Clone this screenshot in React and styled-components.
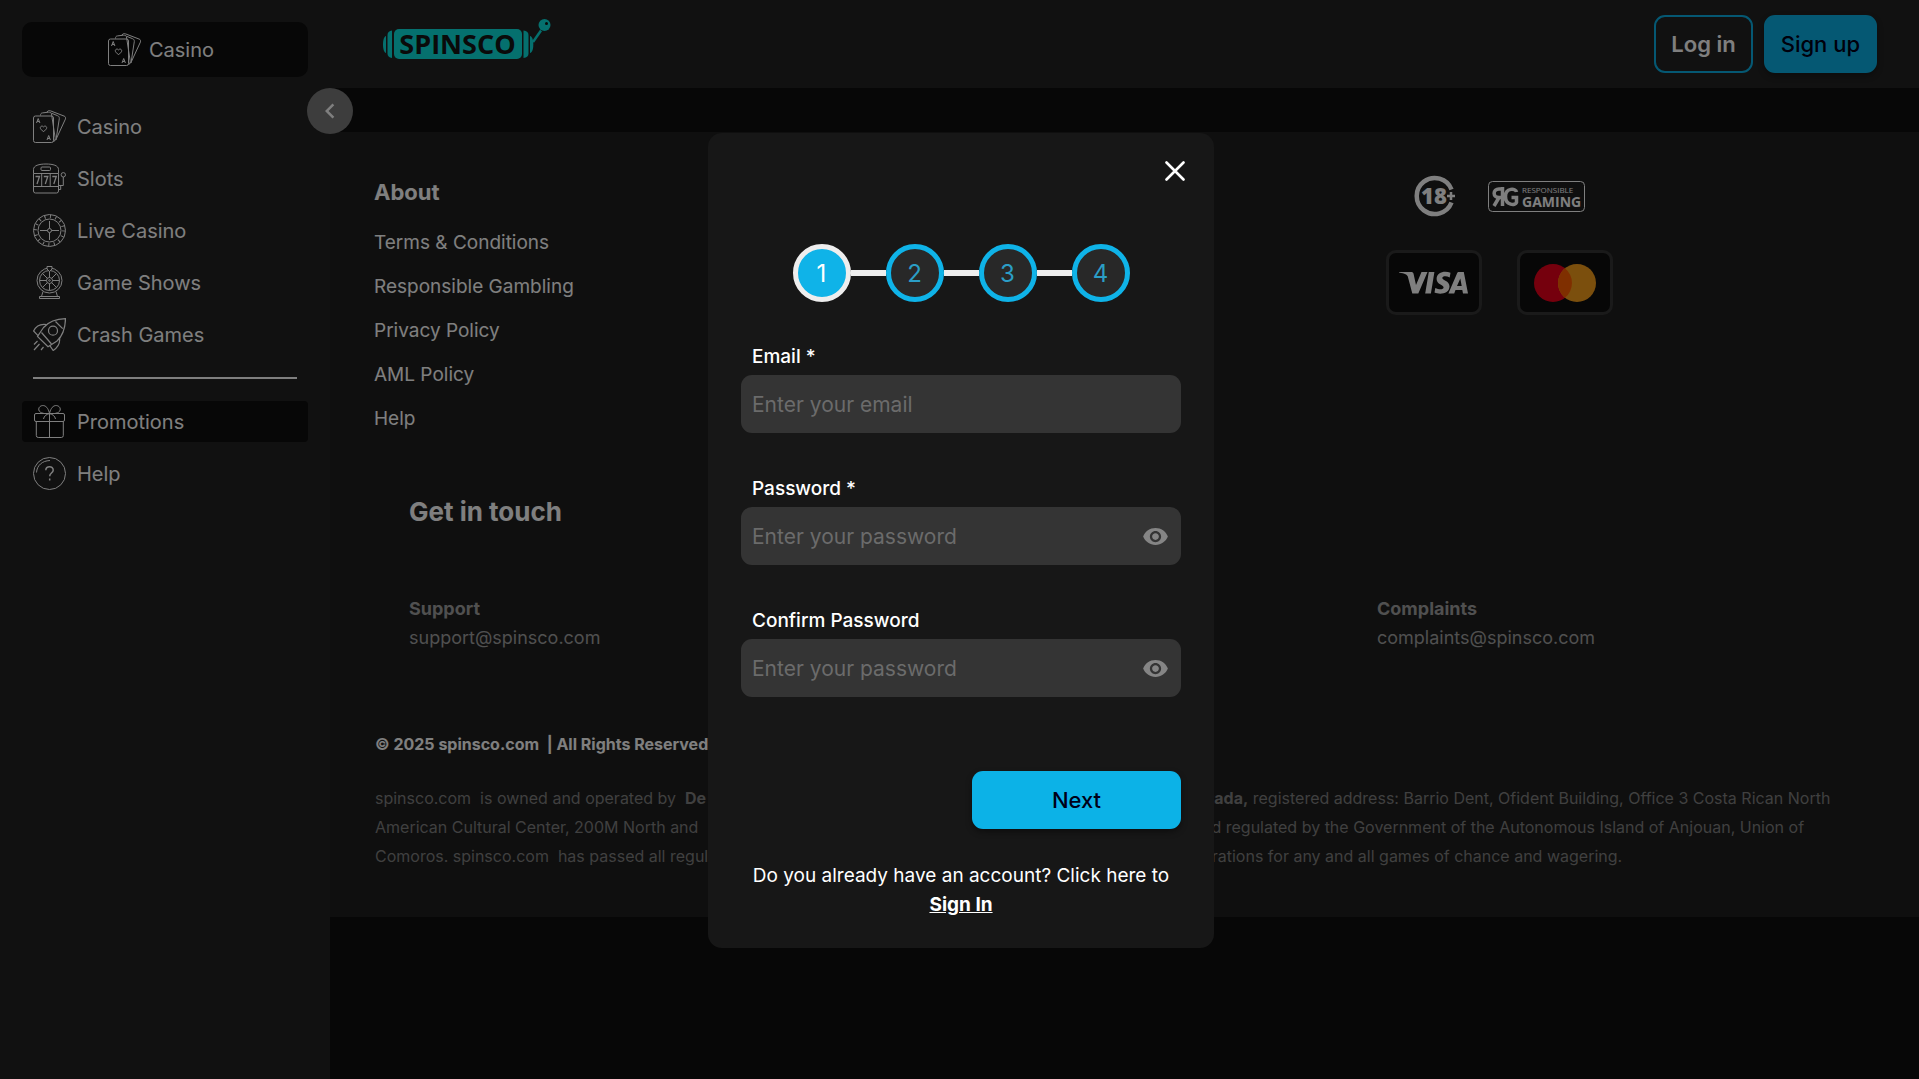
import React, { useState } from "react";
import styled, { createGlobalStyle } from "styled-components";
import { MdVisibility, MdChevronLeft } from "react-icons/md";

const GlobalStyle = createGlobalStyle`
  * {
    box-sizing: border-box;
  }
  body {
    margin: 0;
    background: #0e0e0e;
    color: #fff;
    font-family: Inter, "Open Sans", sans-serif;
  }
  h2, h3, p, ul {
    margin: 0;
    padding: 0;
  }
  a {
    color: inherit;
    text-decoration: none;
  }
  button, input {
    font-family: inherit;
  }
`;

const CardsIcon = () => (
  <Icon viewBox="0 0 33 33">
    <rect x="0.5" y="6" width="20" height="26.5" rx="2" />
    <path d="M7.5 5.5c0-1.6.5-2.4 2-2.6l6-.7c2-.2 2.7.5 3 1.800l3.600 23.500c.2 1.800-.2 2.900-1.600 3.500" />
    <path d="M13.500 2.300l1.500-1.300c.8-.6 1.600-.5 2.600-.1l13.600 5.200c1.400.6 1.700 1.600 1.200 3l-9 19.500c-.6 1.400-1.400 2.200-2.800 2.900" />
    <path d="M18.700 3.300l5.700 2.300c1.500.6 2 1.500 1.900 3l-3.300 21.400" />
    <path d="M10.500 21.800l-2.600-2.600c-1.800-2 .8-4.400 2.600-2.300 1.800-2.100 4.400.3 2.600 2.300z" />
    <path d="M3.500 13l1.700-4.500L6.900 13M4.100 11.500h2.200M14 30l1.700-4.500 1.700 4.500M14.600 28.500h2.200" />
  </Icon>
);

const SlotsIcon = () => (
  <Icon viewBox="0 0 33 33">
    <path d="M.5 11.500V7.500C.5 3.500 6 2 13 2s12.500 1.500 12.500 5.500v4M.5 11.500v17.500a2 2 0 0 0 2 2h21a2 2 0 0 0 2-2V11.500zM.5 24.500h25" />
    <rect x="8" y="5" width="9.500" height="3.500" rx="1" />
    <path d="M8.700 11.500v13M17.200 11.500v13" />
    <path d="M2.500 14.500h4L4 22M10.800 14.500h4L12.300 22M19.300 14.500h4L20.800 22" strokeWidth="1.300" />
    <circle cx="30.300" cy="12.800" r="2.200" />
    <path d="M30.300 15v8.500h-4.800M25.500 27.500h2.200v-4" />
  </Icon>
);

const RouletteIcon = () => (
  <Icon viewBox="0 0 33 33">
    <circle cx="16.500" cy="16.500" r="16" />
    <circle cx="16.500" cy="16.500" r="14" strokeWidth="3.200" strokeDasharray="1 4.500" />
    <circle cx="16.500" cy="16.500" r="11.500" />
    <circle cx="16.500" cy="16.500" r="2" />
    <path d="M16.500 7v7.500M16.500 18.500V26M7 16.500h7.500M18.500 16.500H26" />
  </Icon>
);

const WheelIcon = () => (
  <Icon viewBox="0 0 33 33">
    <circle cx="16.500" cy="14.500" r="12.500" />
    <circle cx="16.500" cy="14.500" r="10" />
    <circle cx="16.500" cy="14.500" r="3" />
    <circle cx="16.500" cy="14.500" r=".8" />
    <path d="M16.500 4.500v7M16.500 17.500v7M6.500 14.500h7M19.500 14.500h7M9.400 7.400l5 5M18.600 16.600l5 5M23.600 7.400l-5 5M14.400 16.600l-5 5" />
    <path d="M14 .5h5v2.500L16.500 5.500 14 3z" fill="#222" />
    <path d="M10 25.500l-1.500 5h16l-1.500-5M6.500 30.500h20v2h-20z" />
  </Icon>
);

const RocketIcon = () => (
  <Icon viewBox="0 0 33 33" $weight={1.2}>
    <path d="M32.500.6C24 .8 15.500 3.800 10.500 9.500L4.500 18.500 15 28.800l9-5.800C29.500 18 32.300 9.500 32.500.6z" />
    <path d="M22.500 3.500l7.200 7.200" />
    <circle cx="20" cy="12.700" r="4.500" />
    <path d="M13.500 6.500C7 5.500 3 8 .6 13l4.400 4.600M26.500 19.500c1 6-1.300 9.500-6.300 13l-3.400-4.800" />
    <path d="M8.500 14.500l10 11.500M4.500 23l-3.500 3.500M6.500 26l-5.500 6M10.500 29l-2.500 3" />
  </Icon>
);

const GiftIcon = () => (
  <Icon viewBox="0 0 33 33">
    <rect x="1.500" y="8.500" width="30" height="8" rx="1.500" />
    <path d="M3.300 16.500v14a2 2 0 0 0 2 2h23a2 2 0 0 0 2-2v-14M16.500 8.500v24" />
    <path d="M16.500 8.500C13 9 6.500 8.500 5.800 5 5.300 2 8 .2 10.700.6c3.300.5 5 4.400 5.800 7.900zM16.500 8.500c3.500.5 10 0 10.700-3.500.5-3-2.200-4.800-4.900-4.400-3.300.5-5 4.400-5.800 7.900z" />
    <path d="M16.500 8.500c-3 .8-5.500 2.500-6 5.500M16.500 8.500c3 .8 5.500 2.500 6 5.500" />
  </Icon>
);

const HelpIcon = () => (
  <Icon viewBox="0 0 33 33">
    <circle cx="16.500" cy="16.500" r="16" />
    <path d="M3.500 15.500C4 8.500 9 3.800 17 3.500" />
    <path d="M12.800 13.200c.2-4.600 7.600-4.500 7.400 0-.1 2.800-3.500 3-3.500 6M16.700 21.500v2" strokeWidth="1.500" />
  </Icon>
);

const Brand = () => (
  <BrandSvg viewBox="0 0 170 42" role="img" aria-label="Spinsco">
    <g fill="#0ae0dc">
      <path d="M4 18v17c-2-.6-3-4-3-8.500s1-7.900 3-8.500z" />
      <path d="M5.500 17c0-2.500 1.500-4 4.500-4.500v27.500c-3-.5-4.500-2-4.500-4.500z" />
      <rect x="12" y="11" width="128" height="30" rx="5" />
      <path d="M146.500 17c0-2.500-1.500-4-5-4.500v27.500c3.500-.5 5-2 5-4.500z" />
      <path d="M148 18v17c2.300-.6 3.300-4 3.300-8.500s-1-7.900-3.300-8.500z" />
      <circle cx="162.500" cy="7" r="6" />
    </g>
    <path d="M151 24l8-11.500" stroke="#0ae0dc" strokeWidth="2.500" />
    <circle cx="164.500" cy="5.500" r="1.500" fill="#111" />
    <text x="75.500" y="35.500" textAnchor="middle" fontFamily="Open Sans" fontWeight="700" fontSize="27" fill="#151515">
      SPINSCO
    </text>
  </BrandSvg>
);

const AgeBadge = () => (
  <svg width="42" height="42" viewBox="0 0 42 42" role="img" aria-label="18+">
    <path d="M37.500 14.500a18 18 0 1 0 0 13" fill="none" stroke="#fff" strokeWidth="4.500" />
    <text x="7" y="29" fontFamily="Open Sans" fontWeight="800" fontSize="22" fill="#fff">
      18
    </text>
    <path d="M33 21h8M37 17v8" stroke="#fff" strokeWidth="2.500" />
  </svg>
);

const GamingBadge = () => (
  <svg width="97" height="31" viewBox="0 0 97 31" role="img" aria-label="Responsible Gaming">
    <rect x=".5" y=".5" width="96" height="30" rx="4" fill="none" stroke="#fff" />
    <path
      d="M14.500 6v19M14.500 8H11c-6.500 0-6.500 8.500 0 8.500h3.500M11 16.500L6 25M28.500 11c-.5-4-11-4.500-11 4.500s10 9.500 11 6v-5h-5"
      fill="none"
      stroke="#fff"
      strokeWidth="3.500"
    />
    <text x="34" y="12" fontFamily="Open Sans" fontSize="8" fill="#fff">
      RESPONSIBLE
    </text>
    <text x="34" y="26" fontFamily="Open Sans" fontWeight="700" fontSize="14" fill="#fff">
      GAMING
    </text>
  </svg>
);

const Visa = () => (
  <svg width="70" height="24" viewBox="0 0 70 24" role="img" aria-label="Visa">
    <g fill="#fff">
      <path d="M0 1h12c1.500 0 2.300.6 2.600 2l2.400 11L22.500 1h6l-9.200 21.500h-6L8.800 5.500C8.500 4 6 2.500 0 1.500z" />
      <path d="M29.800 1h5.600l-3.500 21.500h-5.700z" />
      <path d="M51.500 1.800l-.8 4.600c-3.500-1.700-7.400-1.300-7.400.6 0 2.500 7.200 2.700 7.200 8.300 0 7.500-9.500 8.800-15 6.300l.8-4.700c3.500 2 8.300 1.900 8.300-.4 0-2.800-7-2.800-7-8.400C37.600.9 46-.6 51.500 1.800z" />
      <path d="M59.800 1h5L69 22.500h-5l-.7-3.500h-6.800l-1.300 3.500h-5.800L58 2.500c.3-1 .8-1.500 1.800-1.500zM61.300 7.500L58 15h4.700z" fillRule="evenodd" />
    </g>
  </svg>
);

const Mastercard = () => (
  <svg width="62" height="38" viewBox="0 0 62 38" role="img" aria-label="Mastercard">
    <circle cx="19" cy="19" r="19" fill="#eb001b" />
    <circle cx="43" cy="19" r="19" fill="#f79e1b" />
    <path d="M31 4.300a19 19 0 0 1 0 29.400 19 19 0 0 1 0-29.400z" fill="#ff5f00" />
  </svg>
);

const menu = [
  { label: "Casino", icon: <CardsIcon /> },
  { label: "Slots", icon: <SlotsIcon /> },
  { label: "Live Casino", icon: <RouletteIcon /> },
  { label: "Game Shows", icon: <WheelIcon /> },
  { label: "Crash Games", icon: <RocketIcon /> },
];

const aboutLinks = [
  "Terms & Conditions",
  "Responsible Gambling",
  "Privacy Policy",
  "AML Policy",
  "Help",
];

function PasswordField({ id, label }) {
  const [visible, setVisible] = useState(false);

  return (
    <Field>
      <Label htmlFor={id}>{label}</Label>
      <InputBox>
        <Input
          id={id}
          type={visible ? "text" : "password"}
          placeholder="Enter your password"
        />
        <EyeButton
          type="button"
          aria-label="Show password"
          onClick={() => setVisible(!visible)}
        >
          <MdVisibility size={27} />
        </EyeButton>
      </InputBox>
    </Field>
  );
}

function SignUpModal({ onClose }) {
  return (
    <Overlay>
      <Modal role="dialog" aria-label="Sign up">
        <CloseButton type="button" aria-label="Close" onClick={onClose}>
          <svg width="20" height="20" viewBox="0 0 20 20">
            <path d="M1.500 1.500l17 17M18.500 1.500l-17 17" stroke="#fff" strokeWidth="2.600" strokeLinecap="round" />
          </svg>
        </CloseButton>
        <Steps>
          {[1, 2, 3, 4].map((step) => (
            <React.Fragment key={step}>
              {step > 1 && <StepLine />}
              <Step $active={step === 1}>{step}</Step>
            </React.Fragment>
          ))}
        </Steps>
        <form onSubmit={(e) => e.preventDefault()}>
          <Field>
            <Label htmlFor="email">Email *</Label>
            <InputBox>
              <Input id="email" type="email" placeholder="Enter your email" />
            </InputBox>
          </Field>
          <PasswordField id="password" label="Password *" />
          <PasswordField id="confirm" label="Confirm Password" />
          <NextButton type="submit">Next</NextButton>
        </form>
        <SignInText>
          Do you already have an account? Click here to
          <br />
          <a href="#signin">Sign In</a>
        </SignInText>
      </Modal>
    </Overlay>
  );
}

function App() {
  const [open, setOpen] = useState(true);

  return (
    <>
      <GlobalStyle />
      <Page>
        <Sidebar>
          <CasinoButton type="button">
            <CardsIcon />
            Casino
          </CasinoButton>
          <Nav>
            {menu.map((item) => (
              <NavItem key={item.label} href="#">
                {item.icon}
                {item.label}
              </NavItem>
            ))}
          </Nav>
          <Divider />
          <Nav>
            <NavItem href="#" $dark>
              <GiftIcon />
              Promotions
            </NavItem>
            <NavItem href="#">
              <HelpIcon />
              Help
            </NavItem>
          </Nav>
          <CollapseButton type="button" aria-label="Collapse menu">
            <MdChevronLeft size={30} />
          </CollapseButton>
        </Sidebar>
        <Main>
          <Header>
            <Brand />
            <Actions>
              <LoginButton type="button">Log in</LoginButton>
              <SignupButton type="button" onClick={() => setOpen(true)}>
                Sign up
              </SignupButton>
            </Actions>
          </Header>
          <Footer>
            <FooterTop>
              <div>
                <AboutTitle>About</AboutTitle>
                <Links>
                  {aboutLinks.map((link) => (
                    <li key={link}>
                      <a href="#">{link}</a>
                    </li>
                  ))}
                </Links>
              </div>
              <Badges>
                <BadgeRow $gap="32px">
                  <AgeBadge />
                  <GamingBadge />
                </BadgeRow>
                <BadgeRow $gap="35px">
                  <PayCard>
                    <Visa />
                  </PayCard>
                  <PayCard>
                    <Mastercard />
                  </PayCard>
                </BadgeRow>
              </Badges>
            </FooterTop>
            <TouchTitle>Get in touch</TouchTitle>
            <Contacts>
              <Contact>
                <strong>Support</strong>
                <a href="mailto:support@spinsco.com">support@spinsco.com</a>
              </Contact>
              <Contact $column={3}>
                <strong>Complaints</strong>
                <a href="mailto:complaints@spinsco.com">complaints@spinsco.com</a>
              </Contact>
            </Contacts>
            <FooterText>
              <Copyright>© 2025 spinsco.com &nbsp;| All Rights Reserved</Copyright>
              <LegalLine $split="801px">
                <span>
                  spinsco.com &nbsp;is owned and operated by &nbsp;<strong>De</strong>
                </span>
                <span>
                  <strong>Limitada,</strong> registered address: Barrio Dent, Ofident Building,
                  Office 3 Costa Rican North
                </span>
              </LegalLine>
              <LegalLine $split="818px">
                <span>American Cultural Center, 200M North and</span>
                <span>
                  and regulated by the Government of the Autonomous Island of Anjouan, Union of
                </span>
              </LegalLine>
              <LegalLine $split="808px">
                <span>Comoros. spinsco.com &nbsp;has passed all regulatory</span>
                <span>operations for any and all games of chance and wagering.</span>
              </LegalLine>
            </FooterText>
          </Footer>
        </Main>
      </Page>
      {open && <SignUpModal onClose={() => setOpen(false)} />}
    </>
  );
}

const Page = styled.div`
  display: flex;
  min-height: 100vh;
`;

const Sidebar = styled.aside`
  position: relative;
  flex: 0 0 330px;
  padding: 22px;
  background: #222;
`;

const Icon = styled.svg`
  width: 33px;
  height: 33px;
  flex-shrink: 0;
  fill: none;
  stroke: #fff;
  stroke-width: ${(props) => props.$weight || 1};
`;

const CasinoButton = styled.button`
  display: flex;
  align-items: center;
  justify-content: center;
  gap: 8px;
  width: 100%;
  height: 55px;
  padding: 0 14px 0 6px;
  margin-bottom: 29px;
  color: #fff;
  background: #0e0e0e;
  border: 0;
  border-radius: 10px;
  font-size: 20px;
  cursor: pointer;
`;

const Nav = styled.nav`
  display: flex;
  flex-direction: column;
  gap: 11px;
`;

const NavItem = styled.a`
  display: flex;
  align-items: center;
  gap: 11px;
  height: 41px;
  padding: 0 11px;
  border-radius: 4px;
  font-size: 20px;
  background: ${(props) => (props.$dark ? "#0e0e0e" : "transparent")};
`;

const Divider = styled.hr`
  height: 2px;
  margin: 22px 11px;
  border: 0;
  background: #fff;
`;

/* sits on the edge between the menu and the content */
const CollapseButton = styled.button`
  position: absolute;
  top: 88px;
  right: -23px;
  display: flex;
  align-items: center;
  justify-content: center;
  width: 46px;
  height: 46px;
  padding: 0;
  color: #fff;
  background: #7a7a7a;
  border: 0;
  border-radius: 50%;
  cursor: pointer;
`;

const Main = styled.main`
  flex: 1;
  min-width: 0;
`;

const Header = styled.header`
  display: flex;
  align-items: center;
  justify-content: space-between;
  height: 88px;
  padding: 0 42px 0 52px;
  margin-bottom: 44px;
  background: #222;
`;

const BrandSvg = styled.svg`
  width: 170px;
  height: 42px;
  margin-bottom: 10px;
`;

const Actions = styled.div`
  display: flex;
  gap: 11px;
`;

const LoginButton = styled.button`
  height: 58px;
  padding: 0 15px;
  color: #fff;
  background: transparent;
  border: 2px solid #0ab1e6;
  border-radius: 11px;
  font-size: 22px;
  font-weight: 600;
  cursor: pointer;
`;

const SignupButton = styled(LoginButton)`
  color: #000018;
  background: #0ab1e6;
  font-weight: 500;
  box-shadow: 0 3px 6px rgba(0, 0, 0, 0.3);
`;

const Footer = styled.footer`
  padding: 42px 44px 45px;
  background: #1e1e1e;
`;

const FooterTop = styled.div`
  display: grid;
  grid-template-columns: 1fr 1fr;
`;

const AboutTitle = styled.h3`
  margin-bottom: 21px;
  font-size: 22px;
  line-height: 36px;
`;

const Links = styled.ul`
  display: flex;
  flex-direction: column;
  gap: 20px;
  list-style: none;
  font-size: 19px;
  line-height: 24px;
`;

const Badges = styled.div`
  display: flex;
  flex-direction: column;
  align-items: center;
  gap: 32px;
`;

const BadgeRow = styled.div`
  display: flex;
  align-items: center;
  min-height: 44px;
  gap: ${(props) => props.$gap};
`;

const PayCard = styled.div`
  display: flex;
  align-items: center;
  justify-content: center;
  width: 96px;
  height: 65px;
  background: #0e0e0e;
  border: 3px solid #343434;
  border-radius: 10px;
`;

const TouchTitle = styled.h2`
  margin: 61px 0 62px 35px;
  font-size: 26px;
  line-height: 40px;
`;

const Contacts = styled.div`
  display: grid;
  grid-template-columns: repeat(3, 1fr);
  padding: 0 14px 0 35px;
  margin-bottom: 78px;
`;

const Contact = styled.div`
  grid-column: ${(props) => props.$column || 1};
  display: flex;
  flex-direction: column;
  color: #a0a0a0;
  font-size: 18px;
  line-height: 29px;
`;

const FooterText = styled.div`
  padding: 0 1px 1px;
  font-size: 16px;
`;

const Copyright = styled.p`
  margin-bottom: 26px;
  font-weight: 700;
  line-height: 28px;
`;

const LegalLine = styled.p`
  display: grid;
  grid-template-columns: ${(props) => props.$split} 1fr;
  color: #808080;
  line-height: 29px;
  white-space: nowrap;
`;

const Overlay = styled.div`
  position: fixed;
  inset: 0;
  display: flex;
  align-items: center;
  justify-content: center;
  padding: 2px 0 0 3px;
  background: rgba(0, 0, 0, 0.5);
`;

const Modal = styled.div`
  position: relative;
  width: 506px;
  padding: 111px 33px 29px;
  background: #171717;
  border-radius: 14px;
`;

const CloseButton = styled.button`
  position: absolute;
  top: 22px;
  right: 23px;
  display: flex;
  padding: 6px;
  background: none;
  border: 0;
  cursor: pointer;
`;

const Steps = styled.div`
  display: flex;
  align-items: center;
  justify-content: center;
  margin-bottom: 40px;
`;

const Step = styled.div`
  display: flex;
  align-items: center;
  justify-content: center;
  width: 58px;
  height: 58px;
  border: 5px solid ${(props) => (props.$active ? "#eee" : "#0fb3e8")};
  border-radius: 50%;
  color: ${(props) => (props.$active ? "#fff" : "#2b9ec6")};
  background: ${(props) => (props.$active ? "#0fb3e8" : "#282828")};
  font-size: 24px;
`;

const StepLine = styled.div`
  width: 35px;
  height: 6px;
  background: #eee;
`;

const Field = styled.div`
  margin-bottom: 41px;
`;

const Label = styled.label`
  display: block;
  height: 33px;
  padding-left: 11px;
  font-size: 19px;
  font-weight: 500;
  line-height: 29px;
`;

const InputBox = styled.div`
  display: flex;
  align-items: center;
  height: 58px;
  padding: 0 12px 0 11px;
  background: #343434;
  border-radius: 11px;
`;

const Input = styled.input`
  flex: 1;
  min-width: 0;
  padding: 0;
  color: #fff;
  background: none;
  border: 0;
  outline: none;
  font-size: 21px;
  &::placeholder {
    color: #6b6b6b;
    opacity: 1;
  }
`;

const EyeButton = styled.button`
  display: flex;
  padding: 0;
  color: #858585;
  background: none;
  border: 0;
  cursor: pointer;
`;

const NextButton = styled.button`
  display: block;
  width: 209px;
  height: 58px;
  margin: 74px 0 32px auto;
  color: #000018;
  background: #0cb2e7;
  border: 0;
  border-radius: 11px;
  font-size: 22px;
  font-weight: 500;
  box-shadow: 0 3px 6px rgba(0, 0, 0, 0.4);
  cursor: pointer;
`;

const SignInText = styled.p`
  margin: 0 -10px;
  text-align: center;
  font-size: 19px;
  line-height: 29px;
  a {
    font-weight: 700;
    text-decoration: underline;
  }
`;

export default App;
